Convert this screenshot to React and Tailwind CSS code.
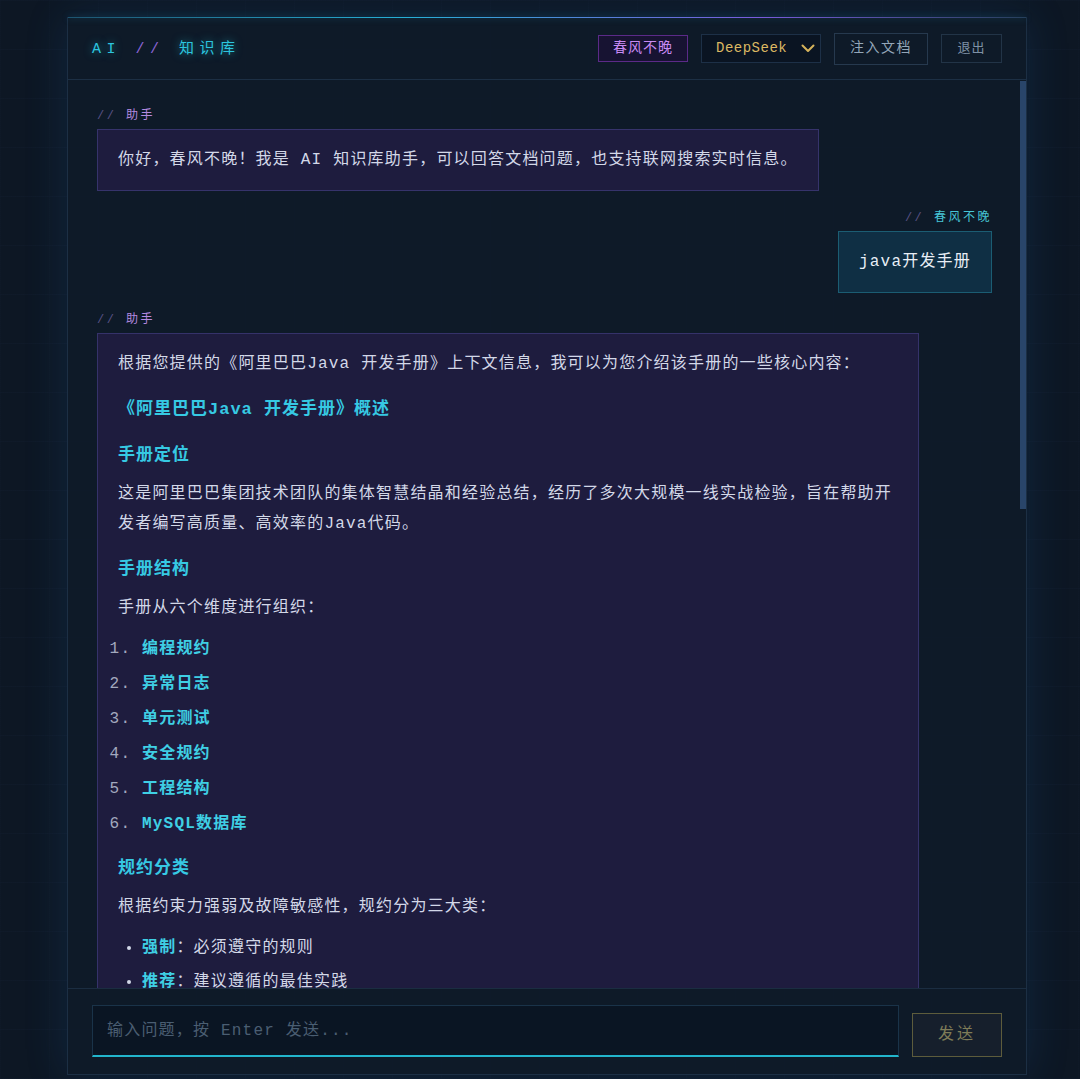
import React from "react";

const mono = "font-[family-name:'Liberation_Mono','Noto_Sans_CJK_SC',monospace]";

function Label({ name, right, color }) {
  return (
    <div className={`mb-[5px] h-[18px] pt-[2px] text-[12px] leading-[16px] tracking-[2.5px] ${right ? "text-right" : ""}`}>
      <span className="text-[#5a5285]">//</span> <span className={color}>{name}</span>
    </div>
  );
}

function Chevron() {
  return (
    <svg width="14" height="9" viewBox="0 0 14 9" fill="none" className="text-[#d6b35b]">
      <polyline points="1.5,1.5 7,7 12.5,1.5" stroke="currentColor" strokeWidth="2" strokeLinecap="round" strokeLinejoin="round" />
    </svg>
  );
}

const sections = ["编程规约", "异常日志", "单元测试", "安全规约", "工程结构", "MySQL数据库"];
const heading = "text-[17px] font-bold tracking-[1px] text-[#36c9e3]";

export default function App() {
  return (
    <div className={`min-h-screen w-full bg-[#0d1724] bg-[linear-gradient(rgba(60,110,160,0.035)_1px,transparent_1px),linear-gradient(90deg,rgba(60,110,160,0.025)_1px,transparent_1px)] bg-[size:49px_49px] pl-[67px] pt-[17px] ${mono}`}>
      <div className="flex h-[1058px] w-[960px] flex-col border-x border-b border-[#1c2f44] bg-[#0f1a29]/95 shadow-[0_0_40px_rgba(30,100,170,0.2)]">
        {/* top accent line */}
        <div className="h-px bg-[linear-gradient(90deg,#1d5470,#26b0d6_35%,#7a5bdc_72%,#26405c)] shadow-[0_0_6px_rgba(38,176,214,0.5)]" />

        {/* header */}
        <header className="flex h-[62px] items-center justify-between border-b border-[#1c2f44] px-[24px]">
          <div className="mt-[3px] text-[15px] tracking-[5.5px] text-[#2cc5df] [text-shadow:0_0_8px_rgba(34,211,238,0.55)]">
            AI <span className="text-[#8a63d2] [text-shadow:none]">//</span> 知识库
          </div>
          <div className="flex items-center gap-[13px]">
            <span className="flex h-[27px] items-center border border-[#5b2a88] bg-[#171332] px-[14px] text-[14px] tracking-[1px] text-[#c88af2]">
              春风不晚
            </span>
            <div className="flex h-[29px] w-[120px] items-center justify-between border border-[#1d3047] bg-[#0a1422] pl-[14px] pr-[5px] text-[14px] tracking-[0.5px] text-[#dcb862]">
              <span>DeepSeek</span>
              <Chevron />
            </div>
            <button className="h-[32px] border border-[#26394e] px-[15px] text-[14px] tracking-[1.5px] text-[#94a7b9]">
              注入文档
            </button>
            <button className="h-[29px] w-[61px] border border-[#223447] text-[13px] tracking-[1px] text-[#7f91a6]">
              退出
            </button>
          </div>
        </header>

        {/* chat */}
        <div className="relative min-h-0 flex-1">
          <div className="h-full overflow-y-auto pb-[25px] pl-[29px] pr-[34px] pt-[26px] text-[16px] leading-[30px] tracking-[1.2px] text-[#d3d8e8] [scrollbar-width:none]">
            <div>
              <Label name="助手" color="text-[#b58ae0]" />
              <div className="w-fit border border-[#36336b] bg-[#1e1c3e] px-[20px] py-[15px]">
                你好，春风不晚！我是 AI 知识库助手，可以回答文档问题，也支持联网搜索实时信息。
              </div>
            </div>

            <div className="mt-[17px]">
              <Label name="春风不晚" right color="text-[#47c6d6]" />
              <div className="ml-auto w-fit border border-[#1b5d73] bg-[#0f2f44] px-[20px] py-[15px] text-[#e8eef6]">
                java开发手册
              </div>
            </div>

            <div className="mt-[17px]">
              <Label name="助手" color="text-[#b58ae0]" />
              <div className="w-[822px] border border-[#35326a] bg-[#1e1c3e] px-[20px] pb-[20px] pt-[15px]">
                <p>根据您提供的《阿里巴巴Java 开发手册》上下文信息，我可以为您介绍该手册的一些核心内容：</p>
                <h3 className={`mt-[16px] ${heading}`}>《阿里巴巴Java 开发手册》概述</h3>
                <h4 className={`mt-[16px] ${heading}`}>手册定位</h4>
                <p className="mt-[8px]">
                  这是阿里巴巴集团技术团队的集体智慧结晶和经验总结，经历了多次大规模一线实战检验，旨在帮助开发者编写高质量、高效率的Java代码。
                </p>
                <h4 className={`mt-[16px] ${heading}`}>手册结构</h4>
                <p className="mt-[8px]">手册从六个维度进行组织：</p>
                <ol className="mt-[11px] list-decimal pl-[24px] marker:text-[#a3a9be]">
                  {sections.map((s, i) => (
                    <li key={s} className={i ? "mt-[5px]" : ""}>
                      <strong className="text-[#3fcfe4]">{s}</strong>
                    </li>
                  ))}
                </ol>
                <h4 className={`mt-[15px] ${heading}`}>规约分类</h4>
                <p className="mt-[8px]">根据约束力强弱及故障敏感性，规约分为三大类：</p>
                <ul className="mt-[11px] list-disc pl-[24px]">
                  <li>
                    <strong className="text-[#3fcfe4]">强制</strong>：必须遵守的规则
                  </li>
                  <li className="mt-[4px]">
                    <strong className="text-[#3fcfe4]">推荐</strong>：建议遵循的最佳实践
                  </li>
                  <li className="mt-[4px]">
                    <strong className="text-[#3fcfe4]">参考</strong>：可根据团队实际情况灵活采用
                  </li>
                </ul>
                <h4 className={`mt-[15px] ${heading}`}>各维度简介</h4>
                <ol className="mt-[8px] list-decimal pl-[24px] marker:text-[#a3a9be]">
                  <li><strong className="text-[#3fcfe4]">编程规约</strong>：涵盖命名风格、常量定义、代码格式、OOP 规约、集合处理、并发处理、控制语句、注释规约等</li>
                  <li className="mt-[5px]"><strong className="text-[#3fcfe4]">异常日志</strong>：规范异常处理方式与日志打印格式，便于问题排查</li>
                  <li className="mt-[5px]"><strong className="text-[#3fcfe4]">单元测试</strong>：强调 AIR 原则，保证测试的自动化、独立性与可重复性</li>
                  <li className="mt-[5px]"><strong className="text-[#3fcfe4]">安全规约</strong>：关注权限校验、数据脱敏、SQL 注入防护等安全问题</li>
                  <li className="mt-[5px]"><strong className="text-[#3fcfe4]">工程结构</strong>：规范应用分层、二方库依赖及服务器配置</li>
                  <li className="mt-[5px]"><strong className="text-[#3fcfe4]">MySQL数据库</strong>：包括建表规约、索引规约、SQL 语句与 ORM 映射</li>
                </ol>
                <h4 className={`mt-[15px] ${heading}`}>使用建议</h4>
                <p className="mt-[8px]">
                  建议团队在项目初期即引入手册规约，并结合 IDE 插件（如 Alibaba Java Coding Guidelines）进行自动化扫描，以持续保障代码质量。
                </p>
                <p className="mt-[8px]">如需了解某一具体章节的详细规约，欢迎继续提问。</p>
              </div>
            </div>
          </div>
          {/* scroll thumb */}
          <div className="absolute right-0 top-px h-[428px] w-[6px] bg-[#29456a]" />
        </div>

        {/* input */}
        <div className="flex items-end gap-[13px] border-t border-[#1b2d41] pb-[17px] pl-[24px] pr-[24px] pt-[16px]">
          <input
            className="h-[52px] flex-1 border border-b-2 border-[#1a3349] border-b-[#22b5cc] bg-[#0a1523] px-[14px] text-[16px] tracking-[1.2px] text-[#d3d8e8] outline-none placeholder:text-[#4a5e72]"
            placeholder="输入问题，按 Enter 发送..."
          />
          <button className="h-[44px] w-[90px] border border-[#5d5c3c] bg-[#161f2c] text-[16px] tracking-[3px] text-[#7f7c58]">
            发送
          </button>
        </div>
      </div>
    </div>
  );
}
